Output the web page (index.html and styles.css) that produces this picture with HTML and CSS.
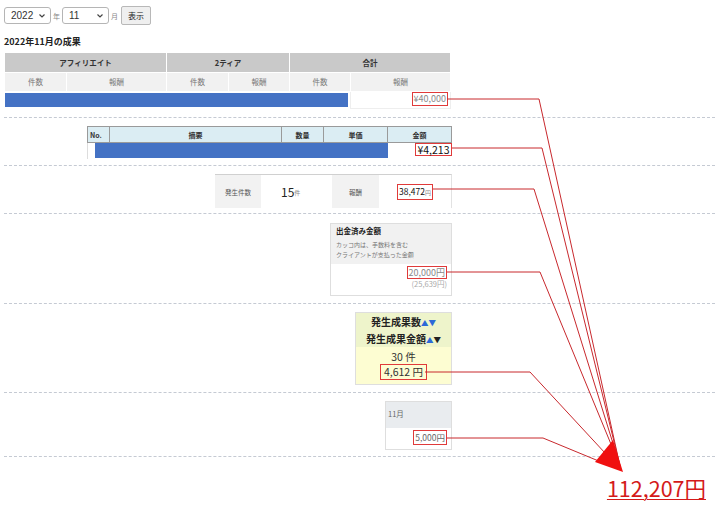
FILE: index.html
```html
<!DOCTYPE html>
<html lang="ja">
<head>
    <meta charset="UTF-8">
    <meta name="viewport" content="width=device-width, initial-scale=1.0">
    <title>成果レポート</title>
    <link rel="stylesheet" href="styles.css">
</head>
<body>
    <div class="report">
        <form class="period">
            <span class="sel-box">
                <select class="sel year"><option>2022</option></select>
                <svg class="chev" width="6" height="4" viewBox="0 0 6 4"><path d="M0.5 0.5 L3 3 L5.5 0.5" fill="none" stroke="#444" stroke-width="1.2"/></svg>
            </span>
            <span class="unit">年</span>
            <span class="sel-box">
                <select class="sel month"><option>11</option></select>
                <svg class="chev" width="6" height="4" viewBox="0 0 6 4"><path d="M0.5 0.5 L3 3 L5.5 0.5" fill="none" stroke="#444" stroke-width="1.2"/></svg>
            </span>
            <span class="unit">月</span>
            <button type="button" class="show-btn">表示</button>
        </form>

        <h2 class="title">2022年11月の成果</h2>

        <!-- 成果一覧 -->
        <div class="block b1">
            <table class="result">
                <colgroup>
                    <col style="width:62px"><col style="width:100px">
                    <col style="width:62px"><col style="width:61px">
                    <col style="width:61px"><col style="width:100px">
                </colgroup>
                <tr class="head1">
                    <th colspan="2">アフィリエイト</th>
                    <th colspan="2">2ティア</th>
                    <th colspan="2">合計</th>
                </tr>
                <tr class="head2">
                    <th>件数</th><th>報酬</th>
                    <th>件数</th><th>報酬</th>
                    <th>件数</th><th>報酬</th>
                </tr>
                <tr class="data">
                    <td colspan="5" class="masked"><div class="mask"></div></td>
                    <td class="amount"><span class="mark grey">¥40,000</span></td>
                </tr>
            </table>
        </div>

        <!-- 明細 -->
        <div class="block b2">
            <div class="inner">
                <table class="detail">
                    <colgroup>
                        <col style="width:22px"><col style="width:172px">
                        <col style="width:42px"><col style="width:64px">
                        <col style="width:64px">
                    </colgroup>
                    <tr>
                        <th class="no">No.</th><th>摘要</th><th>数量</th><th>単価</th><th>金額</th>
                    </tr>
                    <tr class="data">
                        <td colspan="4" class="masked"><div class="mask"></div></td>
                        <td class="amount"><span class="mark dark">¥4,213</span></td>
                    </tr>
                </table>
            </div>
        </div>

        <!-- 発生件数 -->
        <div class="block b3">
            <div class="inner">
                <div class="counts">
                    <div class="cell label w46">発生件数</div>
                    <div class="cell val w71"><span class="big">15</span><span class="small">件</span></div>
                    <div class="cell label w47">報酬</div>
                    <div class="cell val center w72"><span class="mark dark sm">38,472<span class="small">円</span></span></div>
                </div>
            </div>
        </div>

        <!-- 出金済み -->
        <div class="block b4">
            <div class="inner">
                <div class="panel paid">
                    <div class="panel-head">
                        <div class="panel-title">出金済み金額</div>
                        <div class="note">カッコ内は、手数料を含む</div>
                        <div class="note">クライアントが支払った金額</div>
                    </div>
                    <div class="panel-body">
                        <span class="mark grey">20,000円</span>
                        <div class="sub">(25,639円)</div>
                    </div>
                </div>
            </div>
        </div>

        <!-- 発生成果 -->
        <div class="block b5">
            <div class="inner">
                <div class="panel occur">
                    <div class="panel-head">
                        <div>発生成果数<span class="up">▲</span><span class="down blue">▼</span></div>
                        <div>発生成果金額<span class="up">▲</span><span class="down">▼</span></div>
                    </div>
                    <div class="panel-body">
                        <div>30 件</div>
                        <span class="mark">4,612 円</span>
                    </div>
                </div>
            </div>
        </div>

        <!-- 月別 -->
        <div class="block b6">
            <div class="inner">
                <div class="panel month-box">
                    <div class="panel-head">11月</div>
                    <div class="panel-body">
                        <span class="mark grey">5,000円</span>
                    </div>
                </div>
            </div>
        </div>

        <div class="total"><span>112,207円</span></div>
    </div>

    <svg class="flow" width="715" height="508" viewBox="0 0 715 508">
        <g fill="none" stroke="#c8282d" stroke-width="1">
            <polyline points="447,99 539,99 620,466"/>
            <polyline points="452,148 542,148 620,466"/>
            <polyline points="433,189 534,189 620,466"/>
            <polyline points="447,272 540,272 620,466"/>
            <polyline points="425,372 530,372 618,467"/>
            <polyline points="447,438 543,438 618,469"/>
        </g>
        <polygon points="613,440 595,462 623,472" fill="#f01010"/>
    </svg>
</body>
</html>
```

FILE: styles.css
```css
* {
    box-sizing: border-box;
}

body {
    margin: 0;
    font-family: "Noto Sans CJK JP", sans-serif;
    font-size: 9px;
    line-height: 12px;
    color: #333;
    background: #fff;
    position: relative;
    width: 715px;
    height: 508px;
    overflow: hidden;
}

.report {
    padding: 6px 0 0 4px;
}

/* 期間選択 */
.period {
    display: flex;
    align-items: center;
    height: 19px;
    margin: 0;
}

.sel-box {
    position: relative;
    display: inline-flex;
}

.sel {
    -webkit-appearance: none;
    appearance: none;
    height: 17px;
    width: 47px;
    font-size: 10px;
    font-family: "Liberation Sans", sans-serif;
    padding: 0 0 0 6px;
    border: 1px solid #b5b5b5;
    border-radius: 3px;
    background: #fff;
    color: #333;
}

.chev {
    position: absolute;
    right: 6px;
    top: 7px;
}

.unit {
    font-size: 7px;
    color: #888;
    margin: 0 2px;
}

.show-btn {
    height: 19px;
    width: 30px;
    padding: 0;
    margin-left: 1px;
    font-family: inherit;
    font-size: 8px;
    color: #222;
    background: #efefef;
    border: 1px solid #b8b8b8;
    border-radius: 2px;
}

.title {
    font-size: 9px;
    font-weight: 700;
    color: #222;
    line-height: 12px;
    margin: 11px 0 4px 0;
}

/* ブロック区切り */
.block {
    border-bottom: 1px dashed #c5cad3;
}

.block .inner {
    width: 448px;
    display: flex;
    justify-content: flex-end;
}

.b1 { padding: 0 0 8px; }
.b2 { padding: 8px 0 6px; }
.b3 { padding: 8px 0 5px; }
.b4 { padding: 9px 0 7px; }
.b5 { padding: 8px 0 7px; }
.b6 { padding: 8px 0 6px; }

.mark {
    display: inline-block;
    vertical-align: top;
    border: 1px solid #e03a3a;
    padding: 0 1px;
    line-height: 12px;
    font-size: 9px;
    white-space: nowrap;
}

.mark.grey {
    color: #8a8a8a;
}

.mark.dark {
    color: #111;
    font-size: 10.5px;
    line-height: 11px;
}

.mark.sm {
    font-size: 8.5px;
    line-height: 13px;
}

.mask {
    background: #4472c4;
    height: 14px;
}

/* 成果一覧テーブル */
.result {
    width: 446px;
    table-layout: fixed;
    border-collapse: collapse;
}

.result th {
    border: 1px solid #fff;
    font-size: 7.5px;
    line-height: 10px;
    padding: 0;
}

.result .head1 th {
    height: 20px;
    background: #c9c9c9;
    color: #333;
    font-weight: 700;
}

.result .head2 th {
    height: 19px;
    background: #f1f1f1;
    color: #777;
    font-weight: 400;
}

.result td {
    height: 17px;
    padding: 0;
    border: 1px solid #eee;
}

.result .masked {
    padding: 1px 2px 1px 0;
    border: none;
}

.result .amount {
    text-align: right;
    padding: 0 2px 0 0;
    vertical-align: top;
}

/* 明細テーブル */
.detail {
    width: 364px;
    table-layout: fixed;
    border-collapse: collapse;
}

.detail th {
    height: 16px;
    padding: 0;
    background: #dbedf3;
    border: 1px solid #9a9a9a;
    font-size: 7px;
    line-height: 10px;
    font-weight: 700;
    color: #333;
}

.detail th.no {
    text-align: left;
    padding-left: 2px;
}

.detail td {
    height: 16px;
    padding: 0;
    border-left: 1px solid #ddd;
}

.detail .masked {
    padding: 0 0 1px 7px;
}

.detail .masked .mask {
    height: 15px;
}

.detail .amount {
    text-align: right;
    border-left: none;
    vertical-align: top;
}

/* 発生件数 */
.counts {
    display: flex;
    height: 34px;
    border-top: 1px solid #d0d0d0;
    border-right: 1px solid #e2e2e2;
}

.cell {
    display: flex;
    align-items: center;
    justify-content: center;
    font-size: 6.5px;
}

.cell.label {
    background: #f2f2f2;
    color: #555;
}

.cell.val {
    justify-content: flex-start;
    padding: 0 0 0 20px;
    color: #222;
}

.cell.val.center {
    justify-content: center;
    padding: 0;
}

.w46 { width: 46px; }
.w71 { width: 71px; }
.w47 { width: 47px; }
.w72 { width: 72px; }

.big {
    font-size: 12px;
    line-height: 14px;
    color: #222;
}

.small {
    font-size: 6px;
    color: #888;
}

.val .small {
    padding-top: 3px;
}

/* パネル */
.panel {
    border: 1px solid #dedede;
}

.paid {
    width: 122px;
    height: 73px;
}

.paid .panel-head {
    background: #f1f1f1;
    height: 40px;
    padding: 1px 5px 0;
}

.panel-title {
    font-size: 7.5px;
    font-weight: 700;
    color: #222;
    line-height: 12px;
    margin-bottom: 3px;
}

.note {
    font-size: 6px;
    color: #777;
    line-height: 9.5px;
}

.paid .panel-body {
    text-align: right;
    padding: 2px 4px 0 0;
    line-height: 10px;
}

.paid .mark {
    line-height: 11px;
}

.sub {
    font-size: 7.5px;
    color: #aaa;
    line-height: 10px;
}

.occur {
    width: 97px;
    height: 73px;
    text-align: center;
}

.occur .panel-head {
    background: #eef4cb;
    height: 34px;
    padding-top: 1px;
    font-size: 10px;
    font-weight: 700;
    color: #222;
    line-height: 16px;
}

.up,
.down {
    font-size: 7.5px;
    color: #2c69d8;
}

.down {
    color: #222;
}

.down.blue {
    color: #2c69d8;
}

.occur .panel-body {
    background: #fdfdd2;
    height: 37px;
    padding-top: 2px;
    font-size: 10.5px;
    line-height: 15px;
    color: #333;
}

.occur .mark {
    font-size: 10.5px;
    line-height: 14px;
    padding: 0 3px;
}

.month-box {
    width: 67px;
    height: 49px;
}

.month-box .panel-head {
    background: #e9ecef;
    height: 26px;
    padding: 6px 0 0 2px;
    font-size: 7.5px;
    color: #666;
    line-height: 12px;
}

.month-box .panel-body {
    text-align: right;
    padding: 2px 4px 0 0;
}

.month-box .mark {
    font-size: 8.5px;
    line-height: 13px;
    color: #666;
}

/* 合計 */
.total {
    display: flex;
    justify-content: flex-end;
    padding-right: 9px;
    margin-top: 19px;
}

.total span {
    font-size: 21.5px;
    line-height: 24px;
    color: #d41a1a;
    text-decoration: underline;
    text-underline-offset: 2px;
    text-decoration-thickness: 1px;
}

.flow {
    position: absolute;
    top: 0;
    left: 0;
    pointer-events: none;
}
```
